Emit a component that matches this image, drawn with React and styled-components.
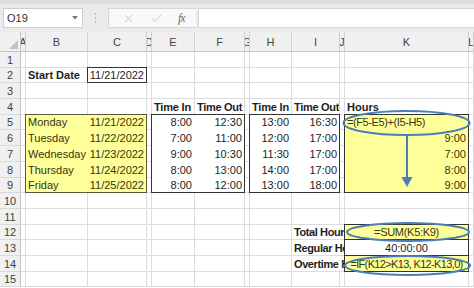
import React from "react";
import styled, { createGlobalStyle } from "styled-components";
import { X, Check } from "lucide-react";

const YELLOW = "#ffff99";
const WHITE = "#ffffff";

const COLS = ["A", "B", "C", "D", "E", "F", "G", "H", "I", "J", "K", "L"];
const WIDTHS = [5, 62, 59, 5, 43, 50, 5, 42, 48, 5, 124];
const ROW_H = 15.7;

// grid column index of a letter (col 1 is the row header)
const colIdx = (c) => COLS.indexOf(c) + 2;

const cells = {
  B2: { v: "Start Date", bold: true },
  C2: { v: "11/21/2022", align: "right", fill: WHITE },
  E4: { v: "Time In", bold: true, ls: -0.2 },
  F4: { v: "Time Out", bold: true, ls: -0.3 },
  H4: { v: "Time In", bold: true, ls: -0.2 },
  I4: { v: "Time Out", bold: true, ls: -0.3 },
  K4: { v: "Hours", bold: true },
  K5: { v: "=(F5-E5)+(I5-H5)", ls: -0.4 },
  I12: { v: "Total Hours", bold: true, span: 2, ls: -0.4 },
  I13: { v: "Regular Hours", bold: true, span: 2, ls: -0.4 },
  I14: { v: "Overtime Hours", bold: true, span: 2, ls: -0.4 },
  K12: { v: "=SUM(K5:K9)", align: "center", fill: YELLOW, ls: -0.3 },
  K13: { v: "40:00:00", align: "center", fill: WHITE },
  K14: { v: "=IF(K12>K13, K12-K13,0)", align: "center", fill: YELLOW, ls: -0.65 },
};

const week = [
  ["Monday", "11/21/2022", "8:00", "12:30", "13:00", "16:30", null],
  ["Tuesday", "11/22/2022", "7:00", "11:00", "12:00", "17:00", "9:00"],
  ["Wednesday", "11/23/2022", "9:00", "10:30", "11:30", "17:00", "7:00"],
  ["Thursday", "11/24/2022", "8:00", "13:00", "14:00", "17:00", "8:00"],
  ["Friday", "11/25/2022", "8:00", "12:00", "13:00", "18:00", "9:00"],
];

week.forEach((d, i) => {
  const r = i + 5;
  cells["B" + r] = { v: d[0], fill: YELLOW };
  cells["C" + r] = { v: d[1], align: "right", fill: YELLOW };
  cells["E" + r] = { v: d[2], align: "right", fill: WHITE };
  cells["F" + r] = { v: d[3], align: "right", fill: WHITE };
  cells["H" + r] = { v: d[4], align: "right", fill: WHITE };
  cells["I" + r] = { v: d[5], align: "right", fill: WHITE };
  if (d[6]) cells["K" + r] = { v: d[6], align: "right", fill: YELLOW };
  else cells["K" + r] = { ...cells["K" + r], fill: YELLOW };
});

const ranges = [
  { cols: "3 / 5", rows: "6 / 11", color: "#5a5a3a" },
  { cols: "4 / 5", rows: "3 / 4" },
  { cols: "6 / 8", rows: "6 / 11" },
  { cols: "9 / 11", rows: "6 / 11" },
  { cols: "12 / 13", rows: "6 / 11" },
  { cols: "12 / 13", rows: "13 / 14" },
  { cols: "12 / 13", rows: "14 / 15" },
  { cols: "12 / 13", rows: "15 / 16" },
];

const GlobalStyle = createGlobalStyle`
  html, body {
    margin: 0;
    padding: 0;
    background: #fff;
  }
  body {
    font-family: "Liberation Sans", Arial, sans-serif;
    width: 474px;
    height: 288px;
    overflow: hidden;
  }
`;

const Window = styled.div`
  width: 474px;
  height: 288px;
  display: flex;
  flex-direction: column;
  overflow: hidden;
  background: #fff;
`;

const Toolbar = styled.div`
  height: 32px;
  box-sizing: border-box;
  display: flex;
  align-items: flex-start;
  padding: 8px 0 0 3px;
  background: linear-gradient(#dedede 0, #dedede 4px, #e9e9e9 5px, #ececec 100%);
`;

const NameBox = styled.div`
  width: 80px;
  height: 20px;
  box-sizing: border-box;
  background: #fff;
  border: 1px solid #cdcdcd;
  display: flex;
  align-items: center;
  justify-content: space-between;
  padding: 0 4px 0 3px;
  font-size: 11px;
  color: #333;
`;

const Dots = styled.div`
  width: 25px;
  height: 20px;
  display: flex;
  flex-direction: column;
  align-items: center;
  justify-content: center;
  gap: 2px;

  span {
    width: 1px;
    height: 2px;
    background: #b4b4b4;
  }
`;

const Buttons = styled.div`
  width: 88px;
  height: 20px;
  box-sizing: border-box;
  background: #f9f9f9;
  border: 1px solid #d6d6d6;
  border-right: none;
  display: flex;
  align-items: center;
  justify-content: space-around;
  padding: 0 4px 0 6px;
  color: #b9b9b9;
`;

const Fx = styled.span`
  font-family: "Liberation Serif", serif;
  font-style: italic;
  font-size: 12px;
  color: #6c6c6c;
  letter-spacing: -1px;
`;

const FormulaInput = styled.div`
  flex: 1;
  height: 20px;
  margin-left: 2px;
  box-sizing: border-box;
  background: #fff;
  border: 1px solid #d6d6d6;
  border-right: none;
`;

const Sheet = styled.div`
  flex: 1;
  display: grid;
  grid-template-columns: 21px ${WIDTHS.map((w) => w + "px").join(" ")} 1fr;
  grid-template-rows: 20px repeat(15, ${ROW_H}px);
  font-size: 11px;
`;

const Corner = styled.div`
  grid-row: 1;
  grid-column: 1;
  background: #f0f0f0;
  border-right: 1px solid #c4c4c4;
  border-bottom: 1px solid #c4c4c4;
  box-sizing: border-box;
`;

const ColHead = styled.div`
  grid-row: 1;
  grid-column: ${(p) => p.$col};
  box-sizing: border-box;
  background: #f0f0f0;
  border-right: 1px solid #d0d0d0;
  border-bottom: 1px solid #c4c4c4;
  display: flex;
  align-items: center;
  justify-content: center;
  overflow: hidden;
  color: #444;
  font-size: 11px;
  min-width: 0;
`;

const RowHead = styled.div`
  grid-row: ${(p) => p.$row};
  grid-column: 1;
  box-sizing: border-box;
  background: #f0f0f0;
  border-right: 1px solid #c4c4c4;
  border-bottom: 1px solid #dadada;
  display: flex;
  align-items: flex-end;
  justify-content: center;
  padding-bottom: 1px;
  color: #3f3f3f;
  font-size: 11px;
`;

const Cell = styled.div`
  grid-row: ${(p) => p.$row};
  grid-column: ${(p) => p.$col} / span ${(p) => p.$span || 1};
  box-sizing: border-box;
  min-width: 0;
  background: ${(p) => p.$fill || "#fff"};
  border-right: 1px solid ${(p) => p.$fill || "#dcdcdc"};
  border-bottom: 1px solid ${(p) => p.$fill || "#dcdcdc"};
  display: flex;
  align-items: flex-end;
  justify-content: ${(p) =>
    p.$align === "right" ? "flex-end" : p.$align === "center" ? "center" : "flex-start"};
  padding: 0 2px 1px;
  white-space: nowrap;
  overflow: hidden;
  font-weight: ${(p) => (p.$bold ? 700 : 400)};
  letter-spacing: ${(p) => (p.$ls ? p.$ls + "px" : "normal")};
  color: ${(p) => (p.$fill === YELLOW ? "#35350f" : "#1e1e1e")};
`;

const RangeBox = styled.div`
  grid-row: ${(p) => p.$rows};
  grid-column: ${(p) => p.$cols};
  margin: -1px 0 0 -1px;
  border: 1px solid ${(p) => p.$color || "#333"};
  pointer-events: none;
  z-index: 1;
`;

const Shapes = styled.svg`
  grid-row: 1 / -1;
  grid-column: 1 / -1;
  z-index: 2;
  pointer-events: none;
  overflow: visible;
  display: block;
`;

function CornerMark() {
  return (
    <svg width="21" height="20" style={{ display: "block" }}>
      <polygon points="18,8 18,17 9,17" fill="#c2c2c2" />
    </svg>
  );
}

export default function App() {
  const rows = Array.from({ length: 15 }, (_, i) => i + 1);

  return (
    <Window>
      <GlobalStyle />
      <Toolbar>
        <NameBox>
          <span>O19</span>
          <svg width="6" height="4">
            <polygon points="0,0 6,0 3,3.5" fill="#777" />
          </svg>
        </NameBox>
        <Dots>
          <span />
          <span />
          <span />
        </Dots>
        <Buttons>
          <X size={13} strokeWidth={1.4} />
          <Check size={13} strokeWidth={1.4} />
          <Fx>fx</Fx>
        </Buttons>
        <FormulaInput />
      </Toolbar>

      <Sheet>
        <Corner>
          <CornerMark />
        </Corner>
        {COLS.map((c) => (
          <ColHead key={c} $col={colIdx(c)}>
            {c}
          </ColHead>
        ))}

        {rows.map((r) => (
          <React.Fragment key={r}>
            <RowHead $row={r + 1}>{r}</RowHead>
            {COLS.map((c) => {
              if (c === "J" && r >= 12 && r <= 14) return null;
              const cell = cells[c + r] || {};
              return (
                <Cell
                  key={c}
                  $row={r + 1}
                  $col={colIdx(c)}
                  $span={cell.span}
                  $fill={cell.fill}
                  $align={cell.align}
                  $bold={cell.bold}
                  $ls={cell.ls}
                >
                  {cell.v}
                </Cell>
              );
            })}
          </React.Fragment>
        ))}

        {ranges.map((g, i) => (
          <RangeBox key={i} $rows={g.rows} $cols={g.cols} $color={g.color} />
        ))}

        <Shapes width="474" height="256">
          <g fill="none" stroke="#4a7dba" strokeWidth="2">
            <ellipse cx="406.5" cy="91" rx="63" ry="12" />
            <line x1="407" y1="103" x2="407" y2="146" />
            <ellipse cx="408" cy="200" rx="61" ry="9" />
            <ellipse cx="407.5" cy="233.5" rx="62.5" ry="9.5" />
          </g>
          <polygon points="401.5,145 412.5,145 407,155" fill="#4a7dba" />
        </Shapes>
      </Sheet>
    </Window>
  );
}
